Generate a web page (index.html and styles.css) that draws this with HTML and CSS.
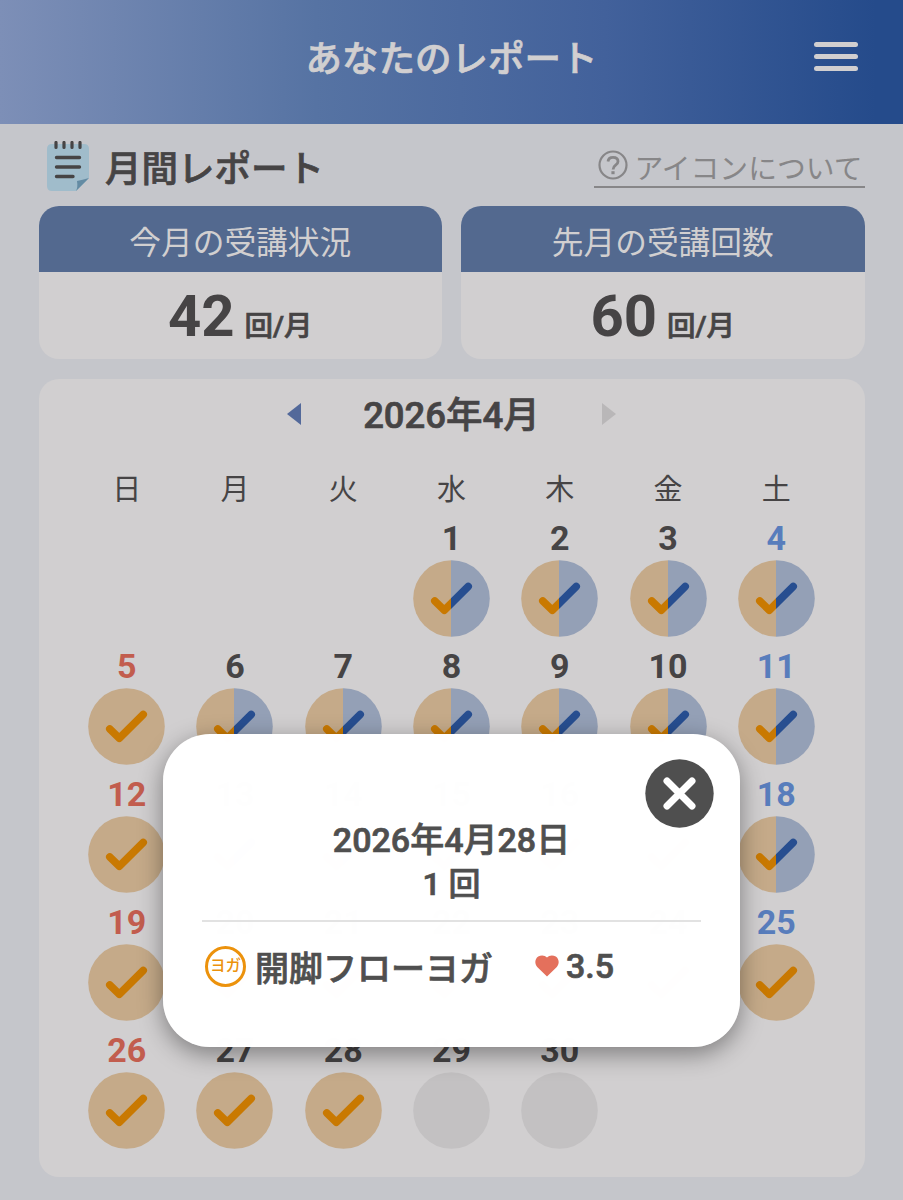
FILE: index.html
```html
<!DOCTYPE html>
<html lang="ja">
<head>
    <meta charset="UTF-8">
    <meta name="viewport" content="width=device-width, initial-scale=1.0">
    <title>あなたのレポート</title>
    <link rel="stylesheet" href="styles.css">
</head>
<body>

    <svg class="defs" width="0" height="0">
        <linearGradient id="halfBg" gradientUnits="userSpaceOnUse" x1="0" y1="0" x2="77" y2="0">
            <stop offset="0.5" stop-color="#c5aa89"/>
            <stop offset="0.5" stop-color="#94a0b6"/>
        </linearGradient>
        <linearGradient id="halfCheck" gradientUnits="userSpaceOnUse" x1="0" y1="0" x2="77" y2="0">
            <stop offset="0.5" stop-color="#c97901"/>
            <stop offset="0.5" stop-color="#274e90"/>
        </linearGradient>
    </svg>

    <header class="header">
        <h1>あなたのレポート</h1>
        <button class="menu" aria-label="メニュー"><span></span><span></span><span></span></button>
    </header>

    <main>
        <div class="section-head">
            <svg class="note-icon" width="42" height="50" viewBox="0 0 42 50">
                <path d="M5 3H37Q42 3 42 8V37L29 50H5Q0 50 0 45V8Q0 3 5 3Z" fill="#a0bccb"/>
                <path d="M29 50Q31 46 30 40Q35 39 42 37Z" fill="#648ba3"/>
                <path d="M9 1.500V6.500M17 1.500V6.500M25 1.500V6.500M33 1.500V6.500" stroke="#464445" stroke-width="3.200" stroke-linecap="round"/>
                <path d="M9.500 16.500H32.500M9.500 26H32.500M9.500 35.500H26" stroke="#464445" stroke-width="3.400" stroke-linecap="round"/>
            </svg>
            <h2>月間レポート</h2>
            <a class="about">
                <svg width="30" height="30" viewBox="0 0 30 30" fill="none" stroke="#878688">
                    <circle cx="15" cy="15" r="13.500" stroke-width="2.200"/>
                    <path d="M10 11.500Q10.500 7.300 15 7.300Q20 7.300 20 11.400Q20 13.500 17.600 15.200Q15.100 17 15.100 19.400" stroke-width="2.800"/>
                    <path d="M15 21.200V24.200" stroke-width="3.200"/>
                </svg>
                <span>アイコンについて</span>
            </a>
        </div>

        <div class="summary">
            <div class="summary-card">
                <div class="summary-title">今月の受講状況</div>
                <div class="summary-count"><strong>42</strong><span>回/月</span></div>
            </div>
            <div class="summary-card">
                <div class="summary-title">先月の受講回数</div>
                <div class="summary-count"><strong>60</strong><span>回/月</span></div>
            </div>
        </div>

        <section class="calendar">
            <div class="month-nav">
                <span class="arrow prev"></span>
                <span class="month">2026年4月</span>
                <span class="arrow next"></span>
            </div>
            <div class="weekdays">
                <span>日</span><span>月</span><span>火</span><span>水</span><span>木</span><span>金</span><span>土</span>
            </div>
            <div class="days" id="days"></div>
        </section>
    </main>

    <div class="modal">
        <button class="close" aria-label="閉じる">
            <svg width="69" height="69" viewBox="0 0 69 69">
                <circle cx="34.500" cy="34.500" r="34.200" fill="#4f4f4f"/>
                <path d="M22 22L47 47M47 22L22 47" stroke="#fff" stroke-width="7" stroke-linecap="round"/>
            </svg>
        </button>
        <div class="modal-head">
            <div>2026年4月28日</div>
            <div class="times">1 回</div>
        </div>
        <div class="lesson">
            <span class="tag">ヨガ</span>
            <span class="lesson-name">開脚フローヨガ</span>
            <svg class="heart" width="24" height="22" viewBox="0 0 24 22">
                <path d="M12 21.500L2.200 12C-0.800 8.500 0 3.700 3.200 1.500C6.300 -0.300 10 0.200 12 2.500C14 0.200 17.700 -0.300 20.800 1.500C24 3.700 24.800 8.500 21.800 12Z" fill="#e4705c"/>
            </svg>
            <span class="intensity">3.5</span>
        </div>
    </div>

    <script>
        // Days with both a yoga lesson and another lesson
        const bothDays = [1, 2, 3, 4, 6, 7, 8, 9, 10, 11, 13, 14, 15, 18];
        const lastAttended = 28;
        const firstWeekday = 3;

        function icon(day) {
            if (day > lastAttended) {
                return '<circle cx="38.5" cy="38.5" r="38.3" fill="#c3c1c2"/>';
            }
            const both = bothDays.includes(day);
            const bg = both ? 'url(#halfBg)' : '#c5aa89';
            const line = both ? 'url(#halfCheck)' : '#c97901';
            return `<circle cx="38.5" cy="38.5" r="38.3" fill="${bg}"/>
                <path d="M21.8 41L31.3 50.2L55.2 26.5" fill="none" stroke="${line}" stroke-width="7.6" stroke-linecap="round" stroke-linejoin="round"/>`;
        }

        let html = '';
        for (let i = 0; i < firstWeekday; i++) {
            html += '<div class="day"></div>';
        }
        for (let day = 1; day <= 30; day++) {
            const weekday = (firstWeekday + day - 1) % 7;
            const name = weekday === 0 ? 'day sun' : weekday === 6 ? 'day sat' : 'day';
            html += `<div class="${name}"><span>${day}</span><svg width="77" height="77" viewBox="0 0 77 77">${icon(day)}</svg></div>`;
        }
        document.getElementById('days').innerHTML = html;
    </script>

</body>
</html>
```
FILE: styles.css
```css
* {
    box-sizing: border-box;
}
body {
    margin: 0;
    height: 1200px;
    overflow: hidden;
    background-color: #c5c6cb;
    color: #464445;
    font-family: Roboto, "Noto Sans CJK JP", sans-serif;
}
h1, h2 {
    margin: 0;
    font-weight: 500;
}
/* a little heavier than medium */
h1, h2, .summary-count span, .month, .modal-head, .lesson-name, .intensity {
    -webkit-text-stroke: 0.7px currentColor;
}
button {
    padding: 0;
    border: none;
    background: none;
}
.defs {
    position: absolute;
}
.header {
    display: grid;
    grid-template-columns: 1fr auto 1fr;
    align-items: center;
    height: 124px;
    padding: 0 45px 4px;
    background: linear-gradient(90deg, #7d8fb7 0%, #5673a3 35%, #42619b 67%, #254b8b 97%);
}
.header h1 {
    grid-column: 2;
    color: #d1cfd0;
    font-size: 36.5px;
    line-height: 50px;
}
.menu {
    justify-self: end;
    display: flex;
    flex-direction: column;
    gap: 7px;
    margin-top: -7px;
}
.menu span {
    width: 44px;
    height: 5px;
    border-radius: 3px;
    background-color: #d1cfd0;
}
main {
    padding: 0 38.5px;
}
.section-head {
    display: flex;
    height: 82px;
    padding-top: 17px;
}
.note-icon {
    margin-left: 8.5px;
}
.section-head h2 {
    margin-left: 16px;
    font-size: 36.5px;
    line-height: 58px;
}
.about {
    display: flex;
    height: 47px;
    margin-left: auto;
    padding: 9px 2px 0 4px;
    border-bottom: 2.5px solid #878688;
    color: #878688;
    font-size: 28.8px;
    line-height: 38px;
}
.about span {
    margin-left: 6px;
}
.summary {
    display: grid;
    grid-template-columns: 1fr 1fr;
    gap: 19px;
}
.summary-card {
    height: 153px;
    border-radius: 20px;
    background-color: #d1cfd0;
    overflow: hidden;
    text-align: center;
}
.summary-title {
    height: 66px;
    background-color: #53698f;
    color: #d1cfd0;
    font-size: 31.7px;
    line-height: 75px;
}
.summary-count {
    line-height: 88px;
    font-weight: 500;
}
.summary-count strong {
    font-size: 58px;
    font-weight: bold;
}
.summary-count span {
    margin-left: 10px;
    font-size: 28.5px;
}
.calendar {
    height: 798px;
    margin-top: 20px;
    padding: 0 34px;
    border-radius: 20px;
    background-color: #d1cfd0;
}
.month-nav {
    display: flex;
    align-items: center;
    justify-content: center;
    height: 69px;
}
.month {
    width: 301px;
    padding-top: 5px;
    text-align: center;
    font-size: 36.5px;
    font-weight: 500;
    line-height: 50px;
}
.arrow {
    border: 11px solid transparent;
}
.prev {
    border-left: none;
    border-right: 14px solid #53699a;
}
.next {
    border-right: none;
    border-left: 14px solid #b9b7b8;
}
.weekdays, .days {
    display: grid;
    grid-template-columns: repeat(7, 1fr);
    text-align: center;
}
.weekdays {
    height: 71px;
    font-size: 29px;
    line-height: 85px;
}
.day {
    display: flex;
    flex-direction: column;
    align-items: center;
    height: 127.9px;
    font-size: 34px;
    font-weight: bold;
    line-height: 38px;
}
.day svg {
    margin-top: 3.4px;
}
.sun {
    color: #c25d4e;
}
.sat {
    color: #587dbc;
}
.modal {
    position: absolute;
    top: 734px;
    left: 163px;
    width: 577px;
    height: 313px;
    padding: 84px 39px 0;
    border-radius: 47px;
    background-color: rgba(255, 255, 255, 0.995);
    box-shadow: 0 7px 24px rgba(0, 0, 0, 0.4);
    color: #4f4f4f;
    font-size: 34px;
    font-weight: 500;
}
.close {
    position: absolute;
    top: 25px;
    right: 26px;
    height: 69px;
}
.modal-head {
    height: 104px;
    border-bottom: 2px solid #e2e2e2;
    line-height: 44px;
    text-align: center;
}
.times {
    font-size: 32px;
}
.lesson {
    display: flex;
    align-items: center;
    height: 88px;
    padding-left: 3px;
}
.tag {
    width: 41px;
    height: 41px;
    border: 3px solid #ec920c;
    border-radius: 50%;
    color: #ec920c;
    font-size: 15.5px;
    line-height: 35px;
    text-align: center;
}
.lesson-name {
    margin-left: 9px;
}
.heart {
    margin-left: 42px;
}
.intensity {
    margin-left: 7px;
}
```
